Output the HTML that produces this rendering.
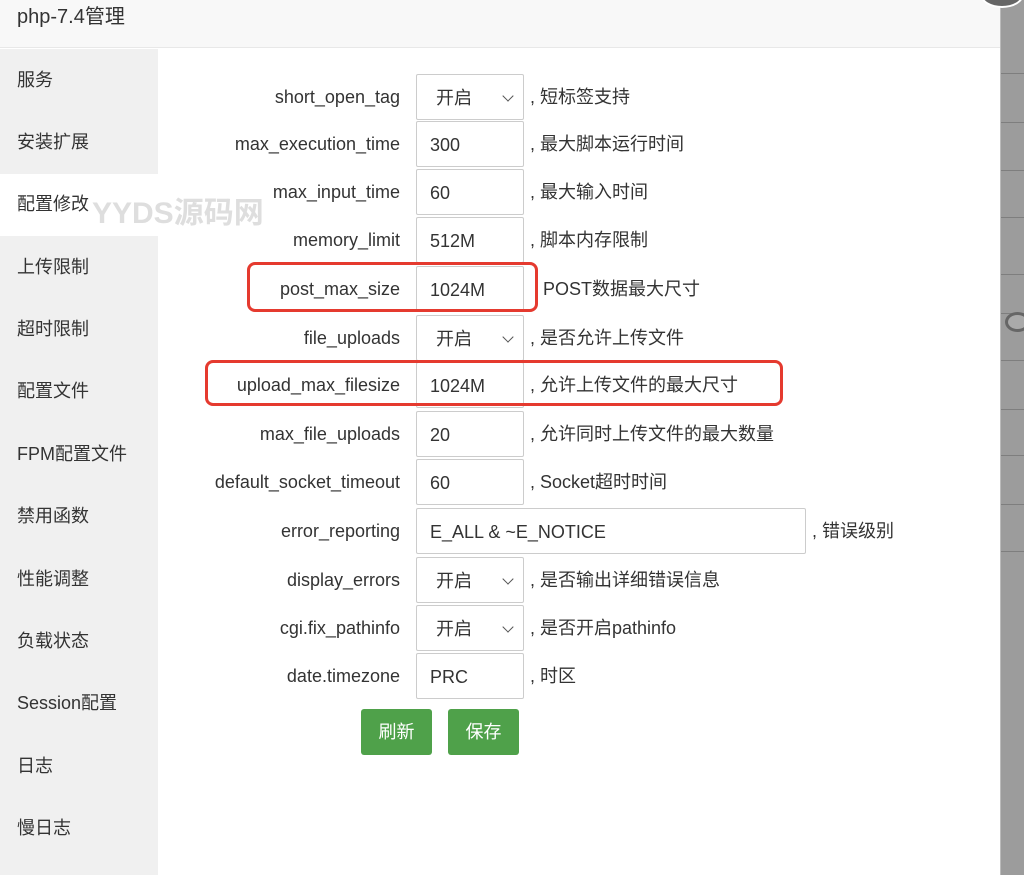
<!DOCTYPE html>
<html><head><meta charset="utf-8"><style>
*{margin:0;padding:0;box-sizing:border-box}
body{width:1024px;height:875px;overflow:hidden;background:#fff;font-family:"Liberation Sans","Noto Sans CJK SC",sans-serif;color:#333;position:relative}
.hdr{position:absolute;left:0;top:0;width:1000px;height:48px;background:#f8f8f8;border-bottom:1px solid #e8e8e8;font-size:20px;line-height:34px;padding-left:17px}
.strip{position:absolute;left:1000px;top:0;width:24px;height:875px;background:#9c9c9c;border-left:1px solid #bbb}
.strip i{position:absolute;left:0;width:24px;height:1px;background:#7e7e7e}
.side{position:absolute;left:0;top:49px;width:158px;height:826px;background:#f0f0f0}
.si{position:absolute;left:17px;font-size:18px;line-height:20px}
.act{position:absolute;left:0;top:174px;width:158px;height:62px;background:#fff}
.row{position:absolute;left:160px;height:46px;font-size:18px;line-height:46px}
.lbl{position:absolute;left:0;width:240px;text-align:right;white-space:nowrap}
.inp{position:absolute;left:256px;width:108px;height:46px;border:1px solid #ccc;border-radius:2px;background:#fff;padding-left:13px}
.inp.sel{padding-left:19px}
.inp.sel:after{content:"";position:absolute;right:11px;top:17px;width:7px;height:7px;border-right:1.3px solid #555;border-bottom:1.3px solid #555;transform:rotate(45deg)}
.ds{position:absolute;left:370px;white-space:nowrap}
.btn{position:absolute;top:709px;height:46px;width:71px;background:#4fa14a;color:#fff;border-radius:3px;font-size:18px;line-height:46px;text-align:center}
.red{position:absolute;border:3px solid #e53a2f;border-radius:8px}
.wm{position:absolute;left:92px;top:188px;font-size:30px;font-weight:bold;color:rgba(200,200,200,.6)}
</style></head><body>
<div class="hdr">php-7.4管理</div>
<div class="strip"><i style="top:73px"></i><i style="top:122px"></i><i style="top:170px"></i><i style="top:217px"></i><i style="top:274px"></i><i style="top:313px"></i><i style="top:360px"></i><i style="top:409px"></i><i style="top:455px"></i><i style="top:504px"></i><i style="top:551px"></i></div>
<div style="position:absolute;left:980px;top:-20px;width:44px;height:28px;border-radius:50%;background:#666;border:2px solid #fff"></div>
<div style="position:absolute;left:1005px;top:312px;width:25px;height:20px;border-radius:50%;border:3px solid #666;background:#aaa"></div>
<div class="side"></div>
<div class="act"></div>
<div class="si" style="top:70px">服务</div>
<div class="si" style="top:132px">安装扩展</div>
<div class="si" style="top:194px">配置修改</div>
<div class="si" style="top:257px">上传限制</div>
<div class="si" style="top:319px">超时限制</div>
<div class="si" style="top:381px">配置文件</div>
<div class="si" style="top:444px">FPM配置文件</div>
<div class="si" style="top:506px">禁用函数</div>
<div class="si" style="top:569px">性能调整</div>
<div class="si" style="top:631px">负载状态</div>
<div class="si" style="top:693px">Session配置</div>
<div class="si" style="top:756px">日志</div>
<div class="si" style="top:818px">慢日志</div>
<div class="wm">YYDS源码网</div>

<div class="row" style="top:74px"><span class="lbl">short_open_tag</span><span class="inp sel">开启</span><span class="ds">, 短标签支持</span></div>
<div class="row" style="top:121px"><span class="lbl">max_execution_time</span><span class="inp">300</span><span class="ds">, 最大脚本运行时间</span></div>
<div class="row" style="top:169px"><span class="lbl">max_input_time</span><span class="inp">60</span><span class="ds">, 最大输入时间</span></div>
<div class="row" style="top:217px"><span class="lbl">memory_limit</span><span class="inp">512M</span><span class="ds">, 脚本内存限制</span></div>
<div class="row" style="top:266px"><span class="lbl">post_max_size</span><span class="inp">1024M</span><span class="ds" style="left:383px">POST数据最大尺寸</span></div>
<div class="row" style="top:315px"><span class="lbl">file_uploads</span><span class="inp sel">开启</span><span class="ds">, 是否允许上传文件</span></div>
<div class="row" style="top:362px"><span class="lbl">upload_max_filesize</span><span class="inp">1024M</span><span class="ds">, 允许上传文件的最大尺寸</span></div>
<div class="row" style="top:411px"><span class="lbl">max_file_uploads</span><span class="inp">20</span><span class="ds">, 允许同时上传文件的最大数量</span></div>
<div class="row" style="top:459px"><span class="lbl">default_socket_timeout</span><span class="inp">60</span><span class="ds">, Socket超时时间</span></div>
<div class="row" style="top:508px"><span class="lbl">error_reporting</span><span class="inp" style="width:390px">E_ALL &amp; ~E_NOTICE</span><span class="ds" style="left:652px">, 错误级别</span></div>
<div class="row" style="top:557px"><span class="lbl">display_errors</span><span class="inp sel">开启</span><span class="ds">, 是否输出详细错误信息</span></div>
<div class="row" style="top:605px"><span class="lbl">cgi.fix_pathinfo</span><span class="inp sel">开启</span><span class="ds">, 是否开启pathinfo</span></div>
<div class="row" style="top:653px"><span class="lbl">date.timezone</span><span class="inp">PRC</span><span class="ds">, 时区</span></div>
<div class="btn" style="left:361px">刷新</div>
<div class="btn" style="left:448px">保存</div>
<div class="red" style="left:247px;top:262px;width:291px;height:50px"></div>
<div class="red" style="left:205px;top:360px;width:578px;height:46px"></div>
</body></html>
